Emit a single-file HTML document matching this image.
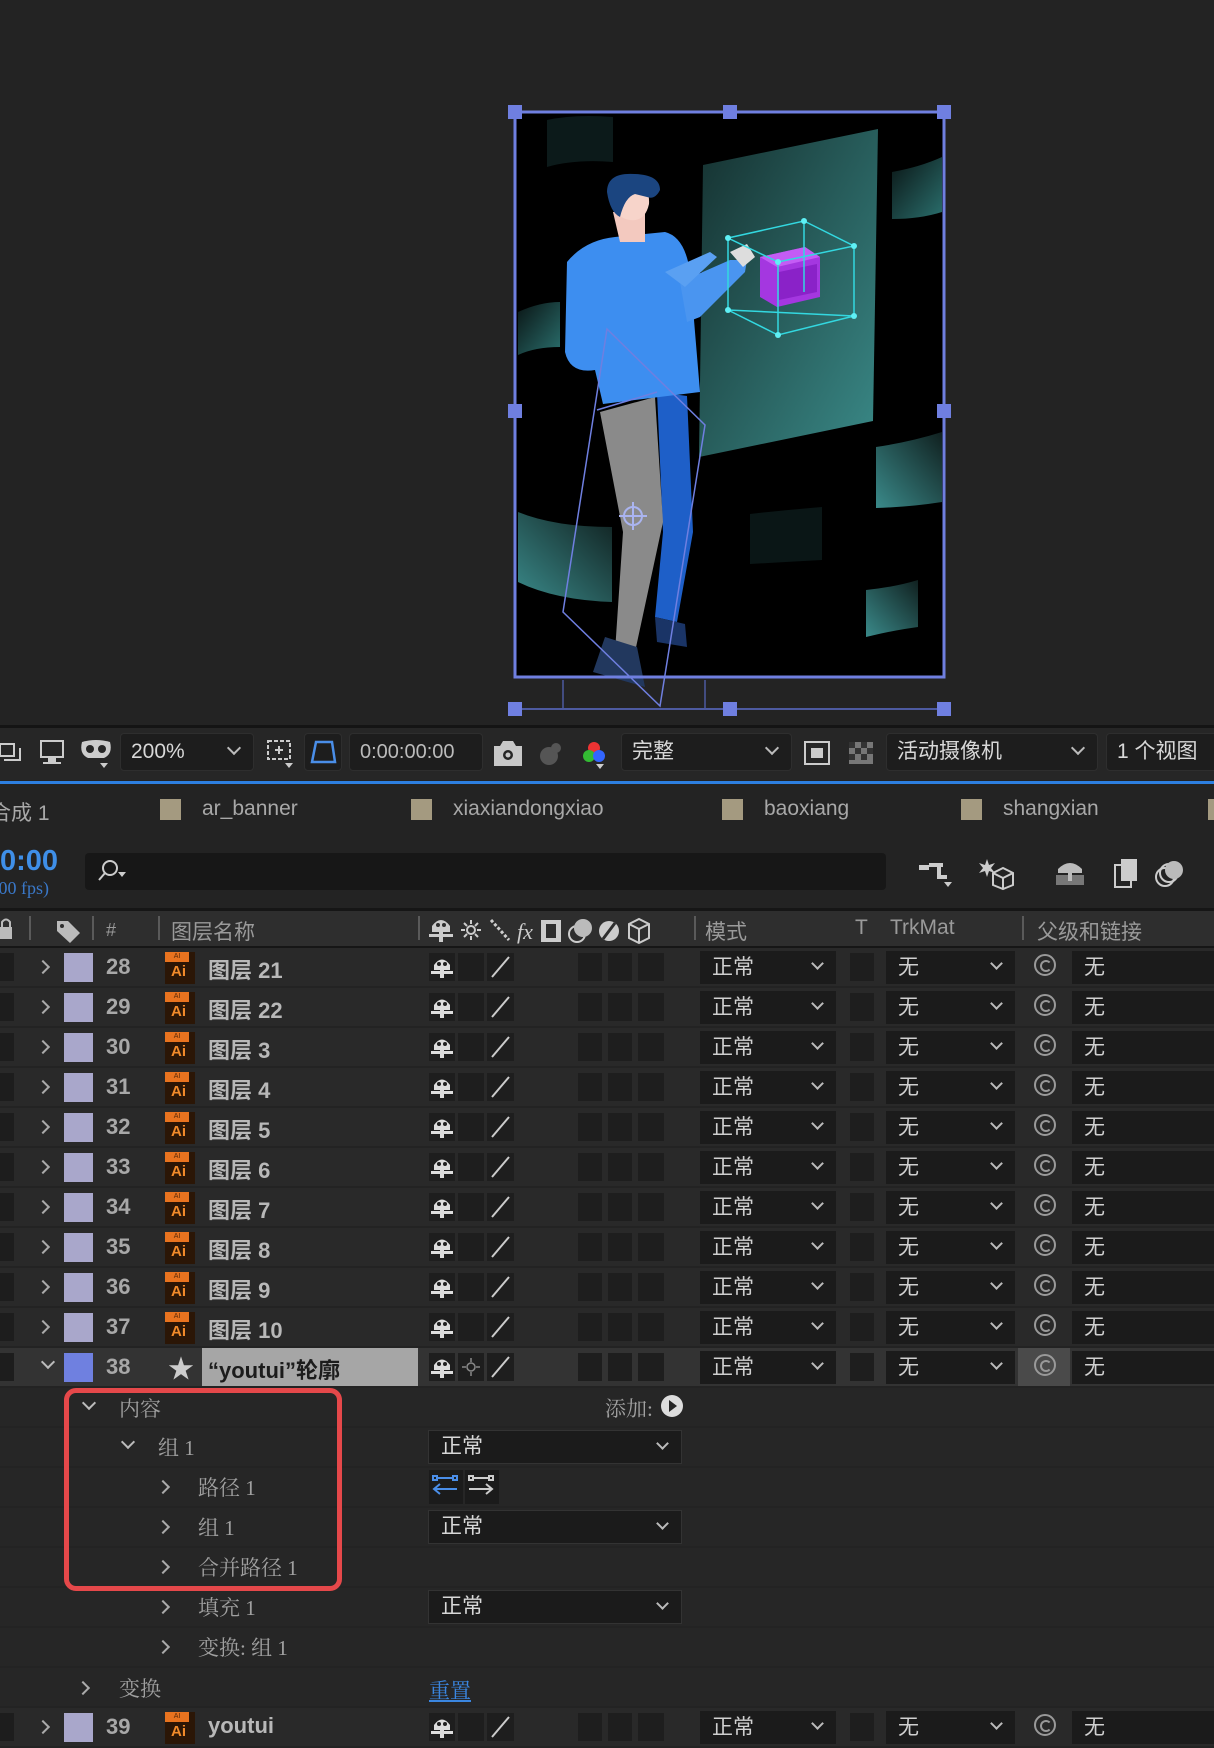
<!DOCTYPE html>
<html><head><meta charset="utf-8">
<style>
*{margin:0;padding:0;box-sizing:border-box}
body{width:1214px;height:1748px;background:#232323;position:relative;overflow:hidden;font-family:"Liberation Sans","Noto Sans CJK SC",sans-serif;color:#c4c4c4}
.a{position:absolute}
.tb{position:absolute;top:733px;height:38px;background:#1d1d1d;border:1px solid #2e2e2e;border-radius:4px;color:#d8d8d8;font-size:21px;line-height:36px;padding-left:10px}
.dn{position:absolute;width:10px;height:10px;border-right:2px solid #bbb;border-bottom:2px solid #bbb;transform:rotate(45deg)}
.rt{position:absolute;width:10px;height:10px;border-right:2px solid #aaa;border-bottom:2px solid #aaa;transform:rotate(-45deg)}
.row{position:absolute;left:0;width:1214px;height:38px;background:#292929}
.sub{position:absolute;left:0;width:1214px;height:38px;background:#262626}
.lk{position:absolute;left:0;top:5px;width:14px;height:28px;background:#1d1d1d}
.sw{position:absolute;left:64px;top:5px;width:29px;height:29px;background:#a9a7cb}
.num{position:absolute;left:106px;top:6px;font-size:22px;font-weight:bold;color:#a8a8a8}
.ai{position:absolute;left:165px;top:4px;width:30px;height:32px;background:#2b1606}
.ai i{position:absolute;left:0;top:0;width:24px;height:10px;background:#e8731f;font-style:normal;font-size:7px;color:#5a2a08;text-align:center;line-height:10px}
.ai b{position:absolute;left:6px;top:11px;font-size:15px;color:#f08a2a;font-weight:bold}
.nm{position:absolute;left:208px;top:5px;font-size:22px;font-weight:bold;color:#b8b8b8}
.sb{position:absolute;top:5px;width:26px;height:28px;background:#1e1e1e}
.dd{position:absolute;top:3px;height:33px;background:#1b1b1b;font-size:21px;line-height:33px;padding-left:12px;color:#d0d0d0}
.dd .dn{right:14px;top:8px;width:9px;height:9px}
.pb{position:absolute;left:1072px;top:3px;width:142px;height:33px;background:#1b1b1b;font-size:21px;line-height:33px;padding-left:12px;color:#d0d0d0}
.sp{position:absolute;left:1034px;top:6px;width:22px;height:22px;border:2px solid #999;border-radius:50%}
.sp:after{content:"";position:absolute;left:4px;top:4px;width:8px;height:8px;border:2px solid #999;border-radius:50%;border-right-color:transparent}
.st{position:absolute;font-size:21px;color:#a0a0a0;font-family:"Liberation Serif","Noto Serif CJK SC",serif}
.sdd{position:absolute;left:428px;height:34px;width:254px;background:#1b1b1b;border:1px solid #333;font-size:21px;line-height:32px;padding-left:12px;color:#d8d8d8}
.sdd .dn{right:14px;top:8px;width:9px;height:9px}
.hd{position:absolute;top:916px;font-size:21px;color:#9a9a9a}
.dv{position:absolute;top:916px;width:2px;height:24px;background:#5a5a5a}
.tab{position:absolute;top:799px;width:21px;height:21px;background:#a49a80}
.tt{position:absolute;top:797px;font-size:21px;color:#a8a8a8}
</style></head><body>

<svg class="a" style="left:0;top:0" width="1214" height="725">
<defs>
<linearGradient id="tl" x1="0" y1="1" x2="1" y2="0"><stop offset="0" stop-color="#3a8a8a"/><stop offset="1" stop-color="#10201f"/></linearGradient>
<linearGradient id="scr" x1="0" y1="0" x2="1" y2="1"><stop offset="0" stop-color="#15302f"/><stop offset="1" stop-color="#3a8a88"/></linearGradient>
<linearGradient id="tl2" x1="0" y1="0" x2="1" y2="1"><stop offset="0" stop-color="#0a1515"/><stop offset="1" stop-color="#2a6e6c"/></linearGradient>
</defs>
<g transform="translate(515,112)">
<rect x="0" y="0" width="429" height="565" fill="#000"/>
<path d="M32 8 Q60 2 98 5 L98 50 Q60 47 32 55Z" fill="#0c1a1a"/>
<path d="M3 200 Q25 190 45 190 L45 235 Q20 235 3 243Z" fill="url(#tl2)"/>
<path d="M3 400 Q40 415 97 415 L97 490 Q40 488 3 470Z" fill="url(#tl)"/>
<path d="M377 60 Q405 55 427 45 L427 100 Q405 107 377 107Z" fill="url(#tl2)"/>
<path d="M361 335 Q395 330 427 320 L427 390 Q395 395 361 396Z" fill="url(#tl)"/>
<path d="M235 402 Q270 398 307 395 L307 448 Q270 450 235 452Z" fill="#0a1616"/>
<path d="M351 478 Q380 475 403 468 L403 515 Q380 518 351 525Z" fill="url(#tl)"/>
<polygon points="188,53 363,17 358,309 184,345" fill="url(#scr)"/>
<path d="M142 280 L172 284 L178 420 L162 510 L140 505 L148 420Z" fill="#1e5fc8"/>
<path d="M140 505 L170 512 L172 535 L142 530Z" fill="#1a3466"/>
<path d="M85 300 L140 285 L148 410 L120 540 L100 540 L108 420Z" fill="#8a8a8a"/>
<path d="M90 525 L122 535 L130 575 L78 560Z" fill="#22385e"/>
<path d="M52 150 Q70 128 100 125 L150 120 Q170 125 175 160 L185 280 L88 292 L80 258 Q55 262 50 240Z" fill="#3d8ef0"/>
<path d="M165 170 L215 148 L232 148 L230 160 L185 205 L172 210Z" fill="#4a95f0"/>
<path d="M150 160 L195 140 L202 145 L170 175Z" fill="#5aa0f2"/>
<path d="M98 100 L130 98 L130 130 L105 130Z" fill="#f3c9bf"/>
<path d="M100 80 Q100 70 120 68 Q135 70 134 92 Q130 110 115 108 Q102 106 100 95Z" fill="#f7d4ca"/>
<path d="M92 80 Q92 60 120 62 Q145 63 145 78 Q140 88 132 85 L120 82 Q110 85 105 105 Q95 100 92 80Z" fill="#1b4580"/>
<path d="M215 140 L232 132 L240 145 L228 155Z" fill="#ddd"/>
<path d="M245 145 L290 135 L305 145 L305 185 L262 195 L245 185Z" fill="#a437e0"/>
<path d="M245 145 L290 135 L305 145 L262 155Z" fill="#c45cf5"/>
<path d="M264 160 L302 152 L302 180 L264 188Z" fill="#8a22c8"/>
<g stroke="#33d8e0" stroke-width="1.5" fill="none">
<polygon points="213,126 289,109 339,134 263,150"/>
<polygon points="213,198 263,223 339,204"/>
<line x1="213" y1="126" x2="213" y2="198"/><line x1="263" y1="150" x2="263" y2="223"/><line x1="339" y1="134" x2="339" y2="204"/><line x1="289" y1="109" x2="289" y2="180"/>
</g>
<g fill="#5ff0f5"><circle cx="213" cy="126" r="3"/><circle cx="289" cy="109" r="3"/><circle cx="339" cy="134" r="3"/><circle cx="263" cy="150" r="3"/><circle cx="213" cy="198" r="3"/><circle cx="263" cy="223" r="3"/><circle cx="339" cy="204" r="3"/></g>
<g stroke="#6f7fe0" stroke-width="1.5" fill="none">
<polygon points="92,217 190,313 145,594 48,500"/>
<line x1="82" y1="298" x2="142" y2="280"/>
</g>
<circle cx="118" cy="404" r="9" stroke="#aab4f0" stroke-width="2" fill="none"/>
<line x1="104" y1="404" x2="132" y2="404" stroke="#aab4f0" stroke-width="2"/><line x1="118" y1="390" x2="118" y2="418" stroke="#aab4f0" stroke-width="2"/>
<rect x="0" y="0" width="429" height="565" fill="none" stroke="#6f7fe0" stroke-width="3"/>
<line x1="0" y1="597" x2="429" y2="597" stroke="#4d5aa0" stroke-width="2"/>
<line x1="48" y1="568" x2="48" y2="597" stroke="#4d5aa0" stroke-width="1.5"/>
<line x1="190" y1="568" x2="190" y2="597" stroke="#4d5aa0" stroke-width="1.5"/>
<g fill="#6f7fe0"><rect x="-7" y="-7" width="14" height="14"/><rect x="208" y="-7" width="14" height="14"/><rect x="422" y="-7" width="14" height="14"/><rect x="-7" y="292" width="14" height="14"/><rect x="422" y="292" width="14" height="14"/><rect x="-7" y="590" width="14" height="14"/><rect x="208" y="590" width="14" height="14"/><rect x="422" y="590" width="14" height="14"/></g>
</g>
</svg>

<div class="a" style="left:0;top:725px;width:1214px;height:3px;background:#141414"></div>
<div class="a" style="left:0;top:728px;width:1214px;height:52px;background:#262626"></div>
<svg class="a" style="left:0;top:738px" width="115" height="32">
<rect x="0" y="6" width="14" height="12" fill="none" stroke="#ccc" stroke-width="2"/><path d="M4 22 H20 V10" stroke="#ccc" stroke-width="2" fill="none"/>
<rect x="41" y="3" width="22" height="16" fill="none" stroke="#ccc" stroke-width="2"/><rect x="48" y="20" width="8" height="4" fill="#ccc"/><rect x="43" y="24" width="18" height="2" fill="#ccc"/>
<path d="M82 4 Q96 0 110 4 Q113 16 104 20 L88 20 Q79 16 82 4Z" fill="#ccc"/><circle cx="90" cy="11" r="4" fill="#262626"/><circle cx="102" cy="11" r="4" fill="#262626"/><path d="M100 25 L108 25 L104 30Z" fill="#ccc"/>
</svg>
<div class="tb" style="left:120px;width:134px">200%<span class="dn" style="right:14px;top:9px"></span></div>
<svg class="a" style="left:265px;top:738px" width="30" height="32"><rect x="3" y="3" width="22" height="18" fill="none" stroke="#ccc" stroke-width="2" stroke-dasharray="4 2"/><path d="M14 8 V16 M10 12 H18" stroke="#ccc" stroke-width="2"/><path d="M20 25 L28 25 L24 30Z" fill="#ccc"/></svg>
<div class="tb" style="left:304px;width:38px;padding:0"><svg width="36" height="36"><path d="M11 8 H27 L30 28 H7Z" fill="none" stroke="#4a8ee8" stroke-width="2.5"/></svg></div>
<div class="tb" style="left:349px;width:134px;color:#bbb;font-size:20px">0:00:00:00</div>
<svg class="a" style="left:494px;top:738px" width="120" height="32"><path d="M0 8 H6 L9 3 H19 L22 8 H28 V28 H0Z" fill="#c8c8c8"/><circle cx="14" cy="17" r="5" fill="#262626"/><circle cx="14" cy="17" r="2.5" fill="#c8c8c8"/>
<circle cx="55" cy="18" r="9" fill="#555"/><circle cx="62" cy="10" r="5" fill="#555"/>
<circle cx="100" cy="10" r="6" fill="#e33"/><circle cx="95" cy="18" r="6" fill="#3b3"/><circle cx="105" cy="18" r="6" fill="#36f"/><path d="M102 26 L110 26 L106 31Z" fill="#ccc"/></svg>
<div class="tb" style="left:621px;width:171px">完整<span class="dn" style="right:14px;top:9px"></span></div>
<svg class="a" style="left:803px;top:738px" width="80" height="32"><rect x="2" y="4" width="24" height="22" fill="none" stroke="#ccc" stroke-width="2"/><rect x="8" y="10" width="12" height="10" fill="#ccc"/>
<rect x="46" y="4" width="24" height="22" fill="#777"/><g fill="#333"><rect x="46" y="4" width="6" height="6"/><rect x="58" y="4" width="6" height="6"/><rect x="52" y="10" width="6" height="6"/><rect x="64" y="10" width="6" height="6"/><rect x="46" y="16" width="6" height="6"/><rect x="58" y="16" width="6" height="6"/></g></svg>
<div class="tb" style="left:886px;width:212px">活动摄像机<span class="dn" style="right:14px;top:9px"></span></div>
<div class="tb" style="left:1106px;width:120px">1 个视图</div>
<div class="a" style="left:0;top:781px;width:1214px;height:3px;background:#2d7fe0"></div>

<div class="tt" style="left:-10px">合成 1</div>
<div class="tab" style="left:160px"></div><div class="tt" style="left:202px">ar_banner</div>
<div class="tab" style="left:411px"></div><div class="tt" style="left:453px">xiaxiandongxiao</div>
<div class="tab" style="left:722px"></div><div class="tt" style="left:764px">baoxiang</div>
<div class="tab" style="left:961px"></div><div class="tt" style="left:1003px">shangxian</div>
<div class="tab" style="left:1208px"></div>

<div class="a" style="left:0;top:845px;font-size:29px;font-weight:bold;color:#3f8fe8">0:00</div>
<div class="a" style="left:-6px;top:878px;font-size:18px;color:#3a78c8;font-family:'Liberation Serif',serif">.00 fps)</div>
<div class="a" style="left:85px;top:853px;width:801px;height:37px;background:#171717;border-radius:4px"></div>
<svg class="a" style="left:96px;top:858px" width="40" height="28"><circle cx="14" cy="10" r="7" fill="none" stroke="#ccc" stroke-width="2"/><line x1="9" y1="15" x2="3" y2="22" stroke="#ccc" stroke-width="2"/><path d="M22 14 L30 14 L26 19Z" fill="#ccc"/></svg>
<svg class="a" style="left:915px;top:855px" width="280" height="36"><g fill="#ccc">
<rect x="4" y="10" width="10" height="5"/><rect x="14" y="8" width="14" height="4"/><rect x="22" y="8" width="4" height="16"/><rect x="22" y="20" width="10" height="4"/><path d="M29 27 L37 27 L33 32Z"/>
<path d="M72 4 L74 10 L80 8 L76 13 L80 18 L74 16 L72 22 L70 16 L64 18 L68 13 L64 8 L70 10Z"/></g>
<path d="M78 18 L88 13 L98 18 L98 30 L88 34 L78 30Z M78 18 L88 23 L98 18 M88 23 V34" fill="none" stroke="#ccc" stroke-width="2"/>
<path d="M143 14 Q155 2 167 14 V18 H143Z" fill="#bbb"/><rect x="141" y="20" width="28" height="10" fill="#777"/><rect x="153" y="16" width="4" height="10" fill="#bbb"/>
<rect x="200" y="10" width="16" height="22" fill="none" stroke="#ccc" stroke-width="2"/><rect x="206" y="4" width="16" height="22" fill="#ccc"/>
<circle cx="250" cy="22" r="9" fill="none" stroke="#ccc" stroke-width="2"/><circle cx="254" cy="18" r="9" fill="none" stroke="#ccc" stroke-width="2"/><circle cx="259" cy="15" r="9" fill="#bbb"/>
</svg>

<div class="a" style="left:0;top:908px;width:1214px;height:3px;background:#161616"></div>
<div class="a" style="left:0;top:911px;width:1214px;height:36px;background:#2e2e2e"></div>
<div class="a" style="left:0;top:946px;width:1214px;height:2px;background:#161616"></div>
<svg class="a" style="left:0;top:915px" width="90" height="30"><rect x="0" y="12" width="12" height="12" fill="#bbb"/><path d="M2 12 V7 Q6 2 10 7 V12" fill="none" stroke="#bbb" stroke-width="2"/><path d="M57 6 H68 L80 18 L70 28 L57 16Z" fill="#bbb"/><circle cx="62" cy="11" r="2" fill="#2e2e2e"/></svg>
<div class="dv" style="left:29px"></div><div class="dv" style="left:92px"></div><div class="dv" style="left:158px"></div><div class="dv" style="left:418px"></div><div class="dv" style="left:694px"></div><div class="dv" style="left:1022px"></div>
<div class="hd" style="left:106px;font-size:18px;top:920px">#</div>
<div class="hd" style="left:171px">图层名称</div>
<svg class="a" style="left:429px;top:914px" width="240" height="32"><g fill="#ccc"><path d="M3 12 Q12 0 21 12 V18 H3Z"/><rect x="0" y="20" width="24" height="3"/><rect x="10" y="18" width="4" height="10"/></g><circle cx="9" cy="11" r="2" fill="#2e2e2e"/><circle cx="15" cy="11" r="2" fill="#2e2e2e"/>
<circle cx="42" cy="16" r="4" fill="none" stroke="#ccc" stroke-width="2"/><path d="M42 6 V10 M42 22 V26 M32 16 H36 M48 16 H52 M35 9 L38 12 M46 20 L49 23 M35 23 L38 20 M46 12 L49 9" stroke="#ccc" stroke-width="2"/>
<path d="M62 6 L80 26" stroke="#ccc" stroke-width="3" stroke-dasharray="3 2"/>
<text x="88" y="25" font-size="22" font-style="italic" fill="#ccc" font-family="Liberation Serif">fx</text>
<rect x="112" y="6" width="20" height="22" fill="#ccc"/><rect x="117" y="10" width="10" height="14" fill="#2e2e2e"/>
<circle cx="148" cy="20" r="8" fill="none" stroke="#ccc" stroke-width="2"/><circle cx="154" cy="14" r="9" fill="#bbb"/>
<circle cx="180" cy="17" r="10" fill="#ccc"/><path d="M186 9 L174 25" stroke="#2e2e2e" stroke-width="3"/>
<path d="M200 10 L210 5 L220 10 L220 24 L210 29 L200 24Z M200 10 L210 15 L220 10 M210 15 V29" fill="none" stroke="#ccc" stroke-width="2"/></svg>
<div class="hd" style="left:705px">模式</div>
<div class="hd" style="left:855px">T</div>
<div class="hd" style="left:890px">TrkMat</div>
<div class="hd" style="left:1037px">父级和链接</div>

<div class="row" style="top:948px"><div class="lk"></div><span class="rt" style="left:38px;top:14px"></span><div class="sw"></div><span class="num">28</span><div class="ai"><i>AI</i><b>Ai</b></div><span class="nm">图层 21</span>
<svg class="a" style="left:429px;top:5px" width="240" height="28"><rect x="0" width="26" height="28" fill="#1e1e1e"/><g fill="#ddd"><path d="M5 12 Q13 1 21 12 V17 H5Z"/><rect x="2" y="18" width="22" height="3"/><rect x="11" y="16" width="4" height="9"/></g><circle cx="10" cy="11" r="2" fill="#1e1e1e"/><circle cx="16" cy="11" r="2" fill="#1e1e1e"/><rect x="29" width="26" height="28" fill="#1e1e1e"/><rect x="58" width="27" height="28" fill="#1e1e1e"/><line x1="63" y1="24" x2="80" y2="4" stroke="#ccc" stroke-width="2"/><rect x="149" width="24" height="28" fill="#1e1e1e"/><rect x="179" width="24" height="28" fill="#1e1e1e"/><rect x="209" width="26" height="28" fill="#1e1e1e"/></svg>
<div class="dd" style="left:700px;width:136px">正常<span class="dn"></span></div><div class="sb" style="left:850px;width:24px"></div><div class="dd" style="left:886px;width:129px">无<span class="dn"></span></div><span class="sp"></span><div class="pb">无</div></div>

<div class="row" style="top:988px"><div class="lk"></div><span class="rt" style="left:38px;top:14px"></span><div class="sw"></div><span class="num">29</span><div class="ai"><i>AI</i><b>Ai</b></div><span class="nm">图层 22</span>
<svg class="a" style="left:429px;top:5px" width="240" height="28"><rect x="0" width="26" height="28" fill="#1e1e1e"/><g fill="#ddd"><path d="M5 12 Q13 1 21 12 V17 H5Z"/><rect x="2" y="18" width="22" height="3"/><rect x="11" y="16" width="4" height="9"/></g><circle cx="10" cy="11" r="2" fill="#1e1e1e"/><circle cx="16" cy="11" r="2" fill="#1e1e1e"/><rect x="29" width="26" height="28" fill="#1e1e1e"/><rect x="58" width="27" height="28" fill="#1e1e1e"/><line x1="63" y1="24" x2="80" y2="4" stroke="#ccc" stroke-width="2"/><rect x="149" width="24" height="28" fill="#1e1e1e"/><rect x="179" width="24" height="28" fill="#1e1e1e"/><rect x="209" width="26" height="28" fill="#1e1e1e"/></svg>
<div class="dd" style="left:700px;width:136px">正常<span class="dn"></span></div><div class="sb" style="left:850px;width:24px"></div><div class="dd" style="left:886px;width:129px">无<span class="dn"></span></div><span class="sp"></span><div class="pb">无</div></div>

<div class="row" style="top:1028px"><div class="lk"></div><span class="rt" style="left:38px;top:14px"></span><div class="sw"></div><span class="num">30</span><div class="ai"><i>AI</i><b>Ai</b></div><span class="nm">图层 3</span>
<svg class="a" style="left:429px;top:5px" width="240" height="28"><rect x="0" width="26" height="28" fill="#1e1e1e"/><g fill="#ddd"><path d="M5 12 Q13 1 21 12 V17 H5Z"/><rect x="2" y="18" width="22" height="3"/><rect x="11" y="16" width="4" height="9"/></g><circle cx="10" cy="11" r="2" fill="#1e1e1e"/><circle cx="16" cy="11" r="2" fill="#1e1e1e"/><rect x="29" width="26" height="28" fill="#1e1e1e"/><rect x="58" width="27" height="28" fill="#1e1e1e"/><line x1="63" y1="24" x2="80" y2="4" stroke="#ccc" stroke-width="2"/><rect x="149" width="24" height="28" fill="#1e1e1e"/><rect x="179" width="24" height="28" fill="#1e1e1e"/><rect x="209" width="26" height="28" fill="#1e1e1e"/></svg>
<div class="dd" style="left:700px;width:136px">正常<span class="dn"></span></div><div class="sb" style="left:850px;width:24px"></div><div class="dd" style="left:886px;width:129px">无<span class="dn"></span></div><span class="sp"></span><div class="pb">无</div></div>

<div class="row" style="top:1068px"><div class="lk"></div><span class="rt" style="left:38px;top:14px"></span><div class="sw"></div><span class="num">31</span><div class="ai"><i>AI</i><b>Ai</b></div><span class="nm">图层 4</span>
<svg class="a" style="left:429px;top:5px" width="240" height="28"><rect x="0" width="26" height="28" fill="#1e1e1e"/><g fill="#ddd"><path d="M5 12 Q13 1 21 12 V17 H5Z"/><rect x="2" y="18" width="22" height="3"/><rect x="11" y="16" width="4" height="9"/></g><circle cx="10" cy="11" r="2" fill="#1e1e1e"/><circle cx="16" cy="11" r="2" fill="#1e1e1e"/><rect x="29" width="26" height="28" fill="#1e1e1e"/><rect x="58" width="27" height="28" fill="#1e1e1e"/><line x1="63" y1="24" x2="80" y2="4" stroke="#ccc" stroke-width="2"/><rect x="149" width="24" height="28" fill="#1e1e1e"/><rect x="179" width="24" height="28" fill="#1e1e1e"/><rect x="209" width="26" height="28" fill="#1e1e1e"/></svg>
<div class="dd" style="left:700px;width:136px">正常<span class="dn"></span></div><div class="sb" style="left:850px;width:24px"></div><div class="dd" style="left:886px;width:129px">无<span class="dn"></span></div><span class="sp"></span><div class="pb">无</div></div>

<div class="row" style="top:1108px"><div class="lk"></div><span class="rt" style="left:38px;top:14px"></span><div class="sw"></div><span class="num">32</span><div class="ai"><i>AI</i><b>Ai</b></div><span class="nm">图层 5</span>
<svg class="a" style="left:429px;top:5px" width="240" height="28"><rect x="0" width="26" height="28" fill="#1e1e1e"/><g fill="#ddd"><path d="M5 12 Q13 1 21 12 V17 H5Z"/><rect x="2" y="18" width="22" height="3"/><rect x="11" y="16" width="4" height="9"/></g><circle cx="10" cy="11" r="2" fill="#1e1e1e"/><circle cx="16" cy="11" r="2" fill="#1e1e1e"/><rect x="29" width="26" height="28" fill="#1e1e1e"/><rect x="58" width="27" height="28" fill="#1e1e1e"/><line x1="63" y1="24" x2="80" y2="4" stroke="#ccc" stroke-width="2"/><rect x="149" width="24" height="28" fill="#1e1e1e"/><rect x="179" width="24" height="28" fill="#1e1e1e"/><rect x="209" width="26" height="28" fill="#1e1e1e"/></svg>
<div class="dd" style="left:700px;width:136px">正常<span class="dn"></span></div><div class="sb" style="left:850px;width:24px"></div><div class="dd" style="left:886px;width:129px">无<span class="dn"></span></div><span class="sp"></span><div class="pb">无</div></div>

<div class="row" style="top:1148px"><div class="lk"></div><span class="rt" style="left:38px;top:14px"></span><div class="sw"></div><span class="num">33</span><div class="ai"><i>AI</i><b>Ai</b></div><span class="nm">图层 6</span>
<svg class="a" style="left:429px;top:5px" width="240" height="28"><rect x="0" width="26" height="28" fill="#1e1e1e"/><g fill="#ddd"><path d="M5 12 Q13 1 21 12 V17 H5Z"/><rect x="2" y="18" width="22" height="3"/><rect x="11" y="16" width="4" height="9"/></g><circle cx="10" cy="11" r="2" fill="#1e1e1e"/><circle cx="16" cy="11" r="2" fill="#1e1e1e"/><rect x="29" width="26" height="28" fill="#1e1e1e"/><rect x="58" width="27" height="28" fill="#1e1e1e"/><line x1="63" y1="24" x2="80" y2="4" stroke="#ccc" stroke-width="2"/><rect x="149" width="24" height="28" fill="#1e1e1e"/><rect x="179" width="24" height="28" fill="#1e1e1e"/><rect x="209" width="26" height="28" fill="#1e1e1e"/></svg>
<div class="dd" style="left:700px;width:136px">正常<span class="dn"></span></div><div class="sb" style="left:850px;width:24px"></div><div class="dd" style="left:886px;width:129px">无<span class="dn"></span></div><span class="sp"></span><div class="pb">无</div></div>

<div class="row" style="top:1188px"><div class="lk"></div><span class="rt" style="left:38px;top:14px"></span><div class="sw"></div><span class="num">34</span><div class="ai"><i>AI</i><b>Ai</b></div><span class="nm">图层 7</span>
<svg class="a" style="left:429px;top:5px" width="240" height="28"><rect x="0" width="26" height="28" fill="#1e1e1e"/><g fill="#ddd"><path d="M5 12 Q13 1 21 12 V17 H5Z"/><rect x="2" y="18" width="22" height="3"/><rect x="11" y="16" width="4" height="9"/></g><circle cx="10" cy="11" r="2" fill="#1e1e1e"/><circle cx="16" cy="11" r="2" fill="#1e1e1e"/><rect x="29" width="26" height="28" fill="#1e1e1e"/><rect x="58" width="27" height="28" fill="#1e1e1e"/><line x1="63" y1="24" x2="80" y2="4" stroke="#ccc" stroke-width="2"/><rect x="149" width="24" height="28" fill="#1e1e1e"/><rect x="179" width="24" height="28" fill="#1e1e1e"/><rect x="209" width="26" height="28" fill="#1e1e1e"/></svg>
<div class="dd" style="left:700px;width:136px">正常<span class="dn"></span></div><div class="sb" style="left:850px;width:24px"></div><div class="dd" style="left:886px;width:129px">无<span class="dn"></span></div><span class="sp"></span><div class="pb">无</div></div>

<div class="row" style="top:1228px"><div class="lk"></div><span class="rt" style="left:38px;top:14px"></span><div class="sw"></div><span class="num">35</span><div class="ai"><i>AI</i><b>Ai</b></div><span class="nm">图层 8</span>
<svg class="a" style="left:429px;top:5px" width="240" height="28"><rect x="0" width="26" height="28" fill="#1e1e1e"/><g fill="#ddd"><path d="M5 12 Q13 1 21 12 V17 H5Z"/><rect x="2" y="18" width="22" height="3"/><rect x="11" y="16" width="4" height="9"/></g><circle cx="10" cy="11" r="2" fill="#1e1e1e"/><circle cx="16" cy="11" r="2" fill="#1e1e1e"/><rect x="29" width="26" height="28" fill="#1e1e1e"/><rect x="58" width="27" height="28" fill="#1e1e1e"/><line x1="63" y1="24" x2="80" y2="4" stroke="#ccc" stroke-width="2"/><rect x="149" width="24" height="28" fill="#1e1e1e"/><rect x="179" width="24" height="28" fill="#1e1e1e"/><rect x="209" width="26" height="28" fill="#1e1e1e"/></svg>
<div class="dd" style="left:700px;width:136px">正常<span class="dn"></span></div><div class="sb" style="left:850px;width:24px"></div><div class="dd" style="left:886px;width:129px">无<span class="dn"></span></div><span class="sp"></span><div class="pb">无</div></div>

<div class="row" style="top:1268px"><div class="lk"></div><span class="rt" style="left:38px;top:14px"></span><div class="sw"></div><span class="num">36</span><div class="ai"><i>AI</i><b>Ai</b></div><span class="nm">图层 9</span>
<svg class="a" style="left:429px;top:5px" width="240" height="28"><rect x="0" width="26" height="28" fill="#1e1e1e"/><g fill="#ddd"><path d="M5 12 Q13 1 21 12 V17 H5Z"/><rect x="2" y="18" width="22" height="3"/><rect x="11" y="16" width="4" height="9"/></g><circle cx="10" cy="11" r="2" fill="#1e1e1e"/><circle cx="16" cy="11" r="2" fill="#1e1e1e"/><rect x="29" width="26" height="28" fill="#1e1e1e"/><rect x="58" width="27" height="28" fill="#1e1e1e"/><line x1="63" y1="24" x2="80" y2="4" stroke="#ccc" stroke-width="2"/><rect x="149" width="24" height="28" fill="#1e1e1e"/><rect x="179" width="24" height="28" fill="#1e1e1e"/><rect x="209" width="26" height="28" fill="#1e1e1e"/></svg>
<div class="dd" style="left:700px;width:136px">正常<span class="dn"></span></div><div class="sb" style="left:850px;width:24px"></div><div class="dd" style="left:886px;width:129px">无<span class="dn"></span></div><span class="sp"></span><div class="pb">无</div></div>

<div class="row" style="top:1308px"><div class="lk"></div><span class="rt" style="left:38px;top:14px"></span><div class="sw"></div><span class="num">37</span><div class="ai"><i>AI</i><b>Ai</b></div><span class="nm">图层 10</span>
<svg class="a" style="left:429px;top:5px" width="240" height="28"><rect x="0" width="26" height="28" fill="#1e1e1e"/><g fill="#ddd"><path d="M5 12 Q13 1 21 12 V17 H5Z"/><rect x="2" y="18" width="22" height="3"/><rect x="11" y="16" width="4" height="9"/></g><circle cx="10" cy="11" r="2" fill="#1e1e1e"/><circle cx="16" cy="11" r="2" fill="#1e1e1e"/><rect x="29" width="26" height="28" fill="#1e1e1e"/><rect x="58" width="27" height="28" fill="#1e1e1e"/><line x1="63" y1="24" x2="80" y2="4" stroke="#ccc" stroke-width="2"/><rect x="149" width="24" height="28" fill="#1e1e1e"/><rect x="179" width="24" height="28" fill="#1e1e1e"/><rect x="209" width="26" height="28" fill="#1e1e1e"/></svg>
<div class="dd" style="left:700px;width:136px">正常<span class="dn"></span></div><div class="sb" style="left:850px;width:24px"></div><div class="dd" style="left:886px;width:129px">无<span class="dn"></span></div><span class="sp"></span><div class="pb">无</div></div>

<div class="row" style="top:1348px;background:#333"><div class="lk"></div><span class="dn" style="left:43px;top:9px"></span><div class="sw" style="background:#6f80e0"></div><span class="num">38</span>
<span class="a" style="left:168px;top:1px;font-size:26px;color:#ccc">★</span>
<div class="a" style="left:202px;top:0;width:216px;height:38px;background:#a6a6a6"></div><span class="nm" style="left:208px;color:#1c1c1c">“youtui”轮廓</span>
<svg class="a" style="left:429px;top:5px" width="240" height="28"><rect x="0" width="26" height="28" fill="#1e1e1e"/><g fill="#ddd"><path d="M5 12 Q13 1 21 12 V17 H5Z"/><rect x="2" y="18" width="22" height="3"/><rect x="11" y="16" width="4" height="9"/></g><circle cx="10" cy="11" r="2" fill="#1e1e1e"/><circle cx="16" cy="11" r="2" fill="#1e1e1e"/><rect x="29" width="26" height="28" fill="#1e1e1e"/><circle cx="42" cy="14" r="4" fill="none" stroke="#888" stroke-width="1.5"/><path d="M42 5 V9 M42 19 V23 M33 14 H37 M47 14 H51" stroke="#888" stroke-width="1.5"/><rect x="58" width="27" height="28" fill="#1e1e1e"/><line x1="63" y1="24" x2="80" y2="4" stroke="#ccc" stroke-width="2"/><rect x="149" width="24" height="28" fill="#1e1e1e"/><rect x="179" width="24" height="28" fill="#1e1e1e"/><rect x="209" width="26" height="28" fill="#1e1e1e"/></svg>
<div class="dd" style="left:700px;width:136px">正常<span class="dn"></span></div><div class="sb" style="left:850px;width:24px"></div><div class="dd" style="left:886px;width:129px">无<span class="dn"></span></div><div class="a" style="left:1018px;top:0;width:52px;height:38px;background:#4a4a4a"></div><span class="sp"></span><div class="pb">无</div></div>

<div class="sub" style="top:1388px"></div><div class="sub" style="top:1428px"></div><div class="sub" style="top:1468px"></div><div class="sub" style="top:1508px"></div><div class="sub" style="top:1548px"></div><div class="sub" style="top:1588px"></div><div class="sub" style="top:1628px"></div><div class="sub" style="top:1668px"></div>
<span class="dn" style="left:84px;top:1398px"></span><span class="st" style="left:119px;top:1393px">内容</span>
<span class="st" style="left:605px;top:1393px">添加:</span><svg class="a" style="left:660px;top:1394px" width="24" height="24"><circle cx="12" cy="12" r="11" fill="#ddd"/><path d="M9 6 L17 12 L9 18Z" fill="#262626"/></svg>
<span class="dn" style="left:123px;top:1437px"></span><span class="st" style="left:158px;top:1432px">组 1</span>
<div class="sdd" style="top:1430px">正常<span class="dn"></span></div>
<span class="rt" style="left:158px;top:1482px"></span><span class="st" style="left:198px;top:1472px">路径 1</span>
<svg class="a" style="left:429px;top:1470px" width="72" height="34"><rect x="0" y="0" width="34" height="34" fill="#1b1b1b"/><rect x="36" y="0" width="34" height="34" fill="#1b1b1b"/><g stroke="#4a8ee8" stroke-width="2" fill="none"><rect x="4" y="6" width="4" height="4"/><rect x="24" y="6" width="4" height="4"/><line x1="8" y1="8" x2="24" y2="8"/><path d="M28 19 H6 M11 14 L5 19 L11 24"/></g><g stroke="#ccc" stroke-width="2" fill="none"><rect x="40" y="6" width="4" height="4"/><rect x="60" y="6" width="4" height="4"/><line x1="44" y1="8" x2="60" y2="8"/><path d="M40 19 H62 M57 14 L63 19 L57 24"/></g></svg>
<span class="rt" style="left:158px;top:1522px"></span><span class="st" style="left:198px;top:1512px">组 1</span>
<div class="sdd" style="top:1510px">正常<span class="dn"></span></div>
<span class="rt" style="left:158px;top:1562px"></span><span class="st" style="left:198px;top:1552px">合并路径 1</span>
<span class="rt" style="left:158px;top:1602px"></span><span class="st" style="left:198px;top:1592px">填充 1</span>
<div class="sdd" style="top:1590px">正常<span class="dn"></span></div>
<span class="rt" style="left:158px;top:1642px"></span><span class="st" style="left:198px;top:1632px">变换: 组 1</span>
<span class="rt" style="left:78px;top:1683px"></span><span class="st" style="left:119px;top:1673px">变换</span>
<span class="st" style="left:429px;top:1675px;color:#3a86e0;text-decoration:underline">重置</span>
<div class="a" style="left:64px;top:1388px;width:278px;height:203px;border:5px solid #e5484a;border-radius:12px"></div>

<div class="row" style="top:1708px"><div class="lk"></div><span class="rt" style="left:38px;top:14px"></span><div class="sw"></div><span class="num">39</span><div class="ai"><i>AI</i><b>Ai</b></div><span class="nm">youtui</span>
<svg class="a" style="left:429px;top:5px" width="240" height="28"><rect x="0" width="26" height="28" fill="#1e1e1e"/><g fill="#ddd"><path d="M5 12 Q13 1 21 12 V17 H5Z"/><rect x="2" y="18" width="22" height="3"/><rect x="11" y="16" width="4" height="9"/></g><circle cx="10" cy="11" r="2" fill="#1e1e1e"/><circle cx="16" cy="11" r="2" fill="#1e1e1e"/><rect x="29" width="26" height="28" fill="#1e1e1e"/><rect x="58" width="27" height="28" fill="#1e1e1e"/><line x1="63" y1="24" x2="80" y2="4" stroke="#ccc" stroke-width="2"/><rect x="149" width="24" height="28" fill="#1e1e1e"/><rect x="179" width="24" height="28" fill="#1e1e1e"/><rect x="209" width="26" height="28" fill="#1e1e1e"/></svg>
<div class="dd" style="left:700px;width:136px">正常<span class="dn"></span></div><div class="sb" style="left:850px;width:24px"></div><div class="dd" style="left:886px;width:129px">无<span class="dn"></span></div><span class="sp"></span><div class="pb">无</div></div>
</body></html>
